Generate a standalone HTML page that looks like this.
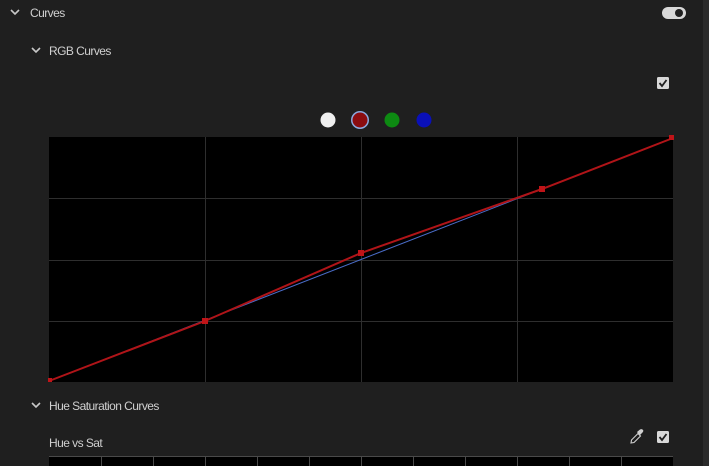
<!DOCTYPE html>
<html><head><style>
body{margin:0;width:709px;height:466px;background:#1f1f1f;overflow:hidden;font-family:"Liberation Sans",sans-serif;color:#d0d0d0;position:relative}
.t{position:absolute;font-size:12px;letter-spacing:-0.55px}
.sb{position:absolute;left:703px;top:0;width:6px;height:466px;background:#2b2b2b}
</style></head><body>
<div class="sb"></div>
<svg style="position:absolute;left:0;top:0" width="709" height="466">
<g fill="none" stroke="#c8c8c8" stroke-width="1.6">
<path d="M11 10 L15 14 L19 10"/><path d="M32 48 L36 52 L40 48"/><path d="M32 403 L36 407 L40 403"/>
</g>
<rect x="662" y="7" width="24" height="12" rx="6" fill="#d8d8d8"/><circle cx="679" cy="13" r="4" fill="#1f1f1f"/>
<rect x="657" y="77" width="12" height="12" rx="1.5" fill="#d8d8d8"/><path d="M659.5 83 L662 86 L666.5 80" stroke="#1f1f1f" stroke-width="1.8" fill="none"/>
<rect x="657" y="431" width="12" height="12" rx="1.5" fill="#d8d8d8"/><path d="M659.5 437 L662 440 L666.5 434" stroke="#1f1f1f" stroke-width="1.8" fill="none"/>
<path d="M631 443 L631.5 440 L638 433.5 L640.5 436 L634 442.5 Z" stroke="#d0d0d0" stroke-width="1.1" fill="none"/>
<path d="M637 432 L640 429.5 Q642 428.5 643 430 Q644 431 642 433 L639.5 435.5 Z" fill="#d0d0d0"/>
<circle cx="328" cy="120" r="7.5" fill="#f0f0f0"/>
<circle cx="360" cy="120" r="9" fill="#8aa8e0"/><circle cx="360" cy="120" r="7.5" fill="#8a0c10"/>
<circle cx="392" cy="120" r="7.5" fill="#0d8a12"/>
<circle cx="424" cy="120" r="7.5" fill="#0a10b8"/>
<rect x="49" y="137" width="624" height="245" fill="#000"/>
<g stroke="#2e2e2e" stroke-width="1">
<path d="M205.5 137V382M361.5 137V382M517.5 137V382M49 198.5H673M49 260.5H673M49 321.5H673"/>
</g>
<path d="M49 381 L673 138" stroke="#4a6cc8" stroke-width="1"/>
<path d="M49 381 L205 321 L361 253 L542 189 L673 138" stroke="#b01418" stroke-width="2" fill="none"/>
<g fill="#c01418"><rect x="202" y="318" width="6" height="6"/><rect x="358" y="250" width="6" height="6"/><rect x="539" y="186" width="6" height="6"/><rect x="669" y="135" width="5" height="5"/><rect x="48" y="378" width="4" height="4"/></g>
<rect x="49" y="456" width="624" height="10" fill="#000"/>
<g stroke="#4a4a4a"><path d="M101.5 456V466M153.5 456V466M205.5 456V466M257.5 456V466M309.5 456V466M361.5 456V466M413.5 456V466M465.5 456V466M517.5 456V466M569.5 456V466M621.5 456V466M49 456.5H673"/></g>
</svg>
<div class="t" style="left:30px;top:6px">Curves</div>
<div class="t" style="left:49px;top:44px">RGB Curves</div>
<div class="t" style="left:49px;top:399px">Hue Saturation Curves</div>
<div class="t" style="left:49px;top:436px">Hue vs Sat</div>
</body></html>
